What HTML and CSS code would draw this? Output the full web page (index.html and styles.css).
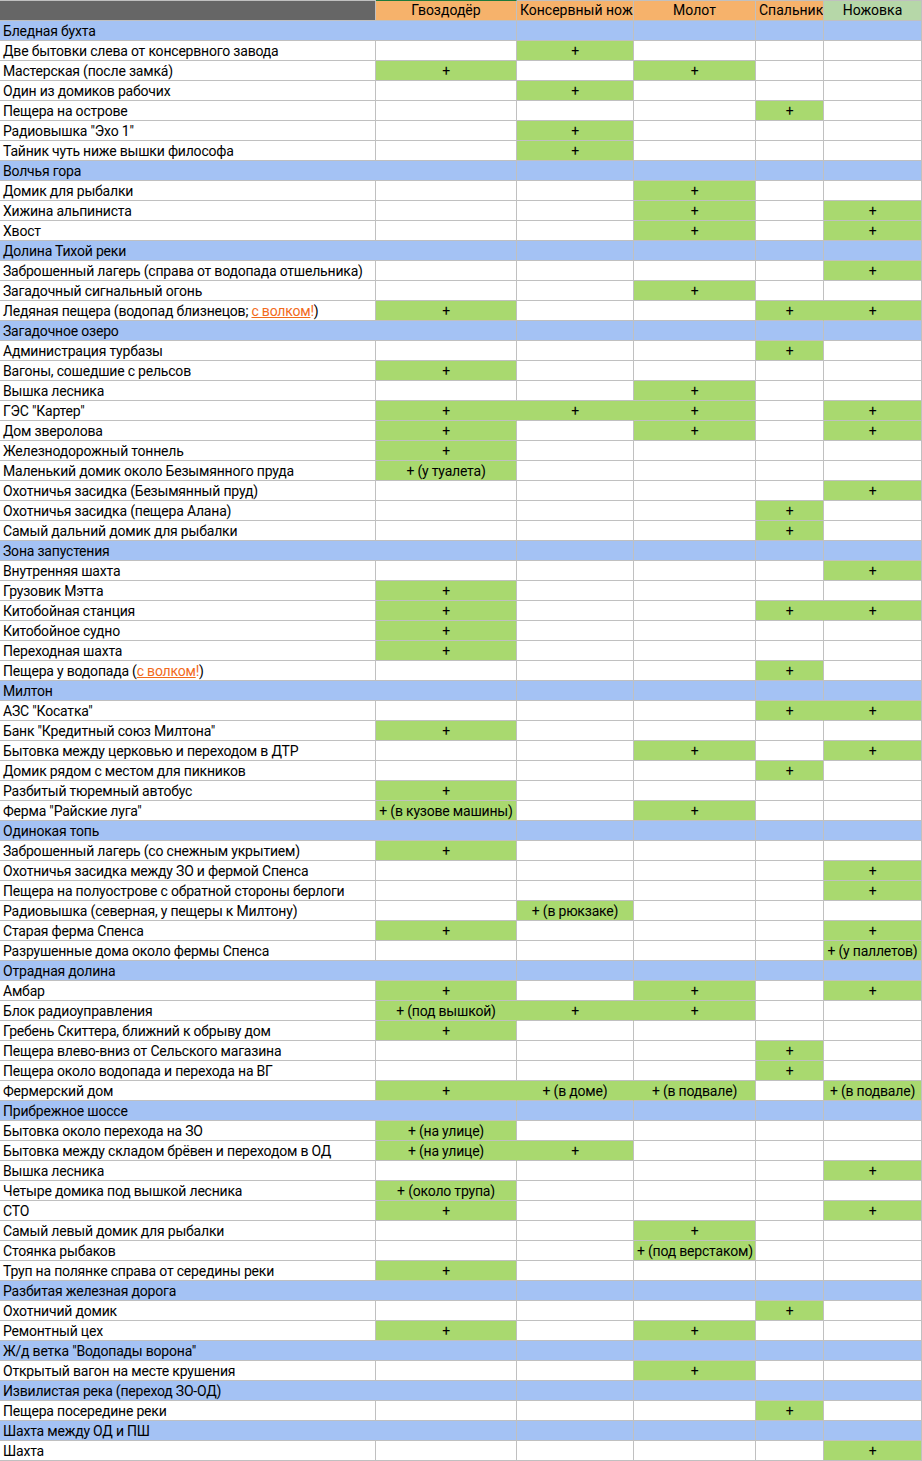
FILE: index.html
```html
<!DOCTYPE html>
<html lang="ru">
<head>
<meta charset="utf-8">
<title>Тайники с инструментами</title>
<link rel="stylesheet" href="styles.css">
</head>
<body>
<table class="sheet">
<colgroup><col class="c-name"><col class="c-g"><col class="c-k"><col class="c-m"><col class="c-s"><col class="c-n"></colgroup>
<thead>
<tr><td class="h-blank"></td><td class="h h-sel">Гвоздодёр</td><td class="h">Консервный нож</td><td class="h">Молот</td><td class="h">Спальник</td><td class="h h-alt">Ножовка</td></tr>
</thead>
<tbody>
<tr class="grp"><td colspan="2">Бледная бухта</td><td></td><td></td><td></td><td></td></tr>
<tr><td>Две бытовки слева от консервного завода</td><td></td><td class="g">+</td><td></td><td></td><td></td></tr>
<tr><td>Мастерская (после замка́)</td><td class="g">+</td><td></td><td class="g">+</td><td></td><td></td></tr>
<tr><td>Один из домиков рабочих</td><td></td><td class="g">+</td><td></td><td></td><td></td></tr>
<tr><td>Пещера на острове</td><td></td><td></td><td></td><td class="g">+</td><td></td></tr>
<tr><td>Радиовышка "Эхо 1"</td><td></td><td class="g">+</td><td></td><td></td><td></td></tr>
<tr><td>Тайник чуть ниже вышки философа</td><td></td><td class="g">+</td><td></td><td></td><td></td></tr>
<tr class="grp"><td colspan="2">Волчья гора</td><td></td><td></td><td></td><td></td></tr>
<tr><td>Домик для рыбалки</td><td></td><td></td><td class="g">+</td><td></td><td></td></tr>
<tr><td>Хижина альпиниста</td><td></td><td></td><td class="g">+</td><td></td><td class="g">+</td></tr>
<tr><td>Хвост</td><td></td><td></td><td class="g">+</td><td></td><td class="g">+</td></tr>
<tr class="grp"><td colspan="2">Долина Тихой реки</td><td></td><td></td><td></td><td></td></tr>
<tr><td>Заброшенный лагерь (справа от водопада отшельника)</td><td></td><td></td><td></td><td></td><td class="g">+</td></tr>
<tr><td>Загадочный сигнальный огонь</td><td></td><td></td><td class="g">+</td><td></td><td></td></tr>
<tr><td>Ледяная пещера (водопад близнецов; <a class="lnk" href="#">с волком</a><span class="exc">!</span>)</td><td class="g">+</td><td></td><td></td><td class="g">+</td><td class="g">+</td></tr>
<tr class="grp"><td colspan="2">Загадочное озеро</td><td></td><td></td><td></td><td></td></tr>
<tr><td>Администрация турбазы</td><td></td><td></td><td></td><td class="g">+</td><td></td></tr>
<tr><td>Вагоны, сошедшие с рельсов</td><td class="g">+</td><td></td><td></td><td></td><td></td></tr>
<tr><td>Вышка лесника</td><td></td><td></td><td class="g">+</td><td></td><td></td></tr>
<tr><td>ГЭС "Картер"</td><td class="g">+</td><td class="g">+</td><td class="g">+</td><td></td><td class="g">+</td></tr>
<tr><td>Дом зверолова</td><td class="g">+</td><td></td><td class="g">+</td><td></td><td class="g">+</td></tr>
<tr><td>Железнодорожный тоннель</td><td class="g">+</td><td></td><td></td><td></td><td></td></tr>
<tr><td>Маленький домик около Безымянного пруда</td><td class="g">+ (у туалета)</td><td></td><td></td><td></td><td></td></tr>
<tr><td>Охотничья засидка (Безымянный пруд)</td><td></td><td></td><td></td><td></td><td class="g">+</td></tr>
<tr><td>Охотничья засидка (пещера Алана)</td><td></td><td></td><td></td><td class="g">+</td><td></td></tr>
<tr><td>Самый дальний домик для рыбалки</td><td></td><td></td><td></td><td class="g">+</td><td></td></tr>
<tr class="grp"><td colspan="2">Зона запустения</td><td></td><td></td><td></td><td></td></tr>
<tr><td>Внутренняя шахта</td><td></td><td></td><td></td><td></td><td class="g">+</td></tr>
<tr><td>Грузовик Мэтта</td><td class="g">+</td><td></td><td></td><td></td><td></td></tr>
<tr><td>Китобойная станция</td><td class="g">+</td><td></td><td></td><td class="g">+</td><td class="g">+</td></tr>
<tr><td>Китобойное судно</td><td class="g">+</td><td></td><td></td><td></td><td></td></tr>
<tr><td>Переходная шахта</td><td class="g">+</td><td></td><td></td><td></td><td></td></tr>
<tr><td>Пещера у водопада (<a class="lnk" href="#">с волком</a><span class="exc">!</span>)</td><td></td><td></td><td></td><td class="g">+</td><td></td></tr>
<tr class="grp"><td colspan="2">Милтон</td><td></td><td></td><td></td><td></td></tr>
<tr><td>АЗС "Косатка"</td><td></td><td></td><td></td><td class="g">+</td><td class="g">+</td></tr>
<tr><td>Банк "Кредитный союз Милтона"</td><td class="g">+</td><td></td><td></td><td></td><td></td></tr>
<tr><td>Бытовка между церковью и переходом в ДТР</td><td></td><td></td><td class="g">+</td><td></td><td class="g">+</td></tr>
<tr><td>Домик рядом с местом для пикников</td><td></td><td></td><td></td><td class="g">+</td><td></td></tr>
<tr><td>Разбитый тюремный автобус</td><td class="g">+</td><td></td><td></td><td></td><td></td></tr>
<tr><td>Ферма "Райские луга"</td><td class="g">+ (в кузове машины)</td><td></td><td class="g">+</td><td></td><td></td></tr>
<tr class="grp"><td colspan="2">Одинокая топь</td><td></td><td></td><td></td><td></td></tr>
<tr><td>Заброшенный лагерь (со снежным укрытием)</td><td class="g">+</td><td></td><td></td><td></td><td></td></tr>
<tr><td>Охотничья засидка между ЗО и фермой Спенса</td><td></td><td></td><td></td><td></td><td class="g">+</td></tr>
<tr><td>Пещера на полуострове с обратной стороны берлоги</td><td></td><td></td><td></td><td></td><td class="g">+</td></tr>
<tr><td>Радиовышка (северная, у пещеры к Милтону)</td><td></td><td class="g">+ (в рюкзаке)</td><td></td><td></td><td></td></tr>
<tr><td>Старая ферма Спенса</td><td class="g">+</td><td></td><td></td><td></td><td class="g">+</td></tr>
<tr><td>Разрушенные дома около фермы Спенса</td><td></td><td></td><td></td><td></td><td class="g">+ (у паллетов)</td></tr>
<tr class="grp"><td colspan="2">Отрадная долина</td><td></td><td></td><td></td><td></td></tr>
<tr><td>Амбар</td><td class="g">+</td><td></td><td class="g">+</td><td></td><td class="g">+</td></tr>
<tr><td>Блок радиоуправления</td><td class="g">+ (под вышкой)</td><td class="g">+</td><td class="g">+</td><td></td><td></td></tr>
<tr><td>Гребень Скиттера, ближний к обрыву дом</td><td class="g">+</td><td></td><td></td><td></td><td></td></tr>
<tr><td>Пещера влево-вниз от Сельского магазина</td><td></td><td></td><td></td><td class="g">+</td><td></td></tr>
<tr><td>Пещера около водопада и перехода на ВГ</td><td></td><td></td><td></td><td class="g">+</td><td></td></tr>
<tr><td>Фермерский дом</td><td class="g">+</td><td class="g">+ (в доме)</td><td class="g">+ (в подвале)</td><td></td><td class="g">+ (в подвале)</td></tr>
<tr class="grp"><td colspan="2">Прибрежное шоссе</td><td></td><td></td><td></td><td></td></tr>
<tr><td>Бытовка около перехода на ЗО</td><td class="g">+ (на улице)</td><td></td><td></td><td></td><td></td></tr>
<tr><td>Бытовка между складом брёвен и переходом в ОД</td><td class="g">+ (на улице)</td><td class="g">+</td><td></td><td></td><td></td></tr>
<tr><td>Вышка лесника</td><td></td><td></td><td></td><td></td><td class="g">+</td></tr>
<tr><td>Четыре домика под вышкой лесника</td><td class="g">+ (около трупа)</td><td></td><td></td><td></td><td></td></tr>
<tr><td>СТО</td><td class="g">+</td><td></td><td></td><td></td><td class="g">+</td></tr>
<tr><td>Самый левый домик для рыбалки</td><td></td><td></td><td class="g">+</td><td></td><td></td></tr>
<tr><td>Стоянка рыбаков</td><td></td><td></td><td class="g">+ (под верстаком)</td><td></td><td></td></tr>
<tr><td>Труп на полянке справа от середины реки</td><td class="g">+</td><td></td><td></td><td></td><td></td></tr>
<tr class="grp"><td colspan="2">Разбитая железная дорога</td><td></td><td></td><td></td><td></td></tr>
<tr><td>Охотничий домик</td><td></td><td></td><td></td><td class="g">+</td><td></td></tr>
<tr><td>Ремонтный цех</td><td class="g">+</td><td></td><td class="g">+</td><td></td><td></td></tr>
<tr class="grp"><td colspan="2">Ж/д ветка "Водопады ворона"</td><td></td><td></td><td></td><td></td></tr>
<tr><td>Открытый вагон на месте крушения</td><td></td><td></td><td class="g">+</td><td></td><td></td></tr>
<tr class="grp"><td colspan="2">Извилистая река (переход ЗО-ОД)</td><td></td><td></td><td></td><td></td></tr>
<tr><td>Пещера посередине реки</td><td></td><td></td><td></td><td class="g">+</td><td></td></tr>
<tr class="grp"><td colspan="2">Шахта между ОД и ПШ</td><td></td><td></td><td></td><td></td></tr>
<tr><td>Шахта</td><td></td><td></td><td></td><td></td><td class="g">+</td></tr>
</tbody>
</table>
</body>
</html>
```

FILE: styles.css
```css
:root {
  --line: #c0c0c0;
  --green: #a9d96f;
  --blue: #a4c2f4;
  --orange: #f6b26b;
  --sage: #b6d7a8;
}

html, body {
  margin: 0;
  padding: 0;
  background: #ffffff;
}

body {
  font-family: Roboto, "Noto Sans", "DejaVu Sans", sans-serif;
  font-size: 14px;
  color: #000000;
}

.sheet {
  table-layout: fixed;
  width: 922px;
  border-collapse: separate;
  border-spacing: 0;
}

.c-name { width: 376px; }
.c-g { width: 141px; }
.c-k { width: 117px; }
.c-m { width: 122px; }
.c-s { width: 68px; }
.c-n { width: 98px; }

.sheet td {
  box-sizing: border-box;
  height: 20px;
  padding: 1px 3px 0;
  line-height: 18px;
  letter-spacing: -0.2px;
  border-right: 1px solid var(--line);
  border-bottom: 1px solid var(--line);
  white-space: nowrap;
  overflow: hidden;
  vertical-align: middle;
}

.sheet thead td {
  height: 21px;
  padding-top: 0;
  line-height: 19px;
  letter-spacing: 0;
  border-top: 1px solid var(--line);
  text-align: center;
  background: var(--orange);
}

.sheet thead td.h-blank {
  background: #666666;
}

.sheet thead td.h-sel {
  border-top-color: #1e7a3c;
}

.sheet thead td.h-alt {
  background: var(--sage);
}

.sheet td.g {
  background: var(--green);
  text-align: center;
}

.sheet td.g:has(+ td.g) {
  border-right-color: var(--green);
}

.sheet tr.grp td {
  background: var(--blue);
}

.lnk {
  color: #f26a1b;
  text-decoration: underline;
}

.exc {
  color: #f26a1b;
}
```
